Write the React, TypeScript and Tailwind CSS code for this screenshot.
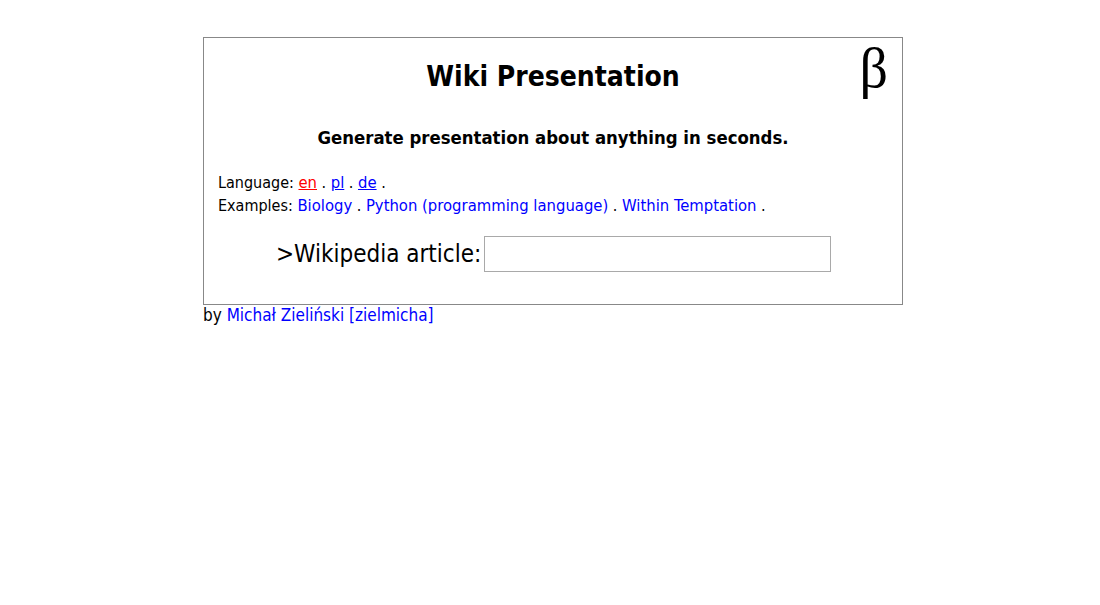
const App = () => {
  return (
    <div className="w-[1100px] h-[605px] bg-white text-black font-['DejaVu_Sans_Condensed','DejaVu_Sans',sans-serif]">
      <div className="w-[700px] ml-[203px] pt-[37px]">
        <div className="relative border border-[#888888] px-[14px] pt-[15px] pb-[32px]">
          <div className="absolute right-[14px] top-[2px] text-[56px] leading-none font-[family-name:'Liberation_Serif',serif]">β</div>
          <h1 className="text-center text-[28px] font-bold leading-[48px]">Wiki Presentation</h1>
          <h2 className="text-center text-[18.4px] font-bold mt-[24px] leading-[26px]">
            Generate presentation about anything in seconds.
          </h2>
          <div className="mt-[20px] text-[16px] leading-[23px]">
            <div>
              Language: <a href="#" className="text-[16.5px] text-[#ff0000] underline">en</a> .{" "}
              <a href="#" className="text-[16.5px] text-[#0000ff] underline">pl</a> .{" "}
              <a href="#" className="text-[16.5px] text-[#0000ff] underline">de</a> .
            </div>
            <div>
              Examples: <a href="#" className="text-[16.5px] text-[#0000ff]">Biology</a> .{" "}
              <a href="#" className="text-[16.5px] text-[#0000ff]">Python (programming language)</a> .{" "}
              <a href="#" className="text-[16.5px] text-[#0000ff]">Within Temptation</a> .
            </div>
          </div>
          <div className="flex items-center mt-[19px] pl-[58px]">
            <span className="text-[24px] leading-[36px]">&gt;Wikipedia article:</span>
            <input type="text" className="ml-[3px] w-[347px] h-[36px] border border-[#a9a9a9] outline-none" />
          </div>
        </div>
        <div className="text-[17px] leading-[21px]">
          by <a href="#" className="text-[#0000ff]">Michał Zieliński [zielmicha]</a>
        </div>
      </div>
    </div>
  );
};

export default App;
